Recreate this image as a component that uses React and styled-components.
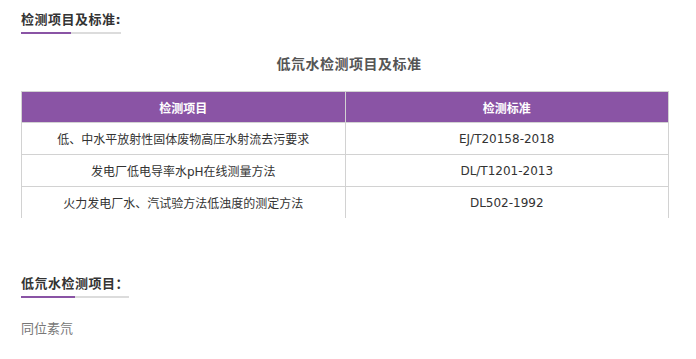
import styled, { createGlobalStyle } from 'styled-components'

const GlobalStyle = createGlobalStyle`
    body {
        margin: 0;
        background: #fff;
        font-family: "DejaVu Sans", "Noto Sans CJK SC", sans-serif;
    }
`

const COLORS = {
    purple: '#8a54a5',
    line: '#d2d2d2',
    text: '#333',
    grey: '#777',
}

const Page = styled.div`
    padding: 9px 27px 0 21px;
    width: 648px;
`

const SectionTitle = styled.h3`
    position: relative;
    display: inline-block;
    margin: 0;
    margin-top: ${p => p.$top || 0}px;
    font-size: 13px;
    line-height: 20px;
    letter-spacing: 0.5px;
    font-weight: 700;
    color: ${COLORS.text};
    padding-bottom: 2px;
    border-bottom: 2px solid #dcdcdc;
    &::after {
        content: '';
        position: absolute;
        left: 0;
        bottom: -2px;
        width: 50%;
        height: 2px;
        background: ${COLORS.purple};
    }
`

const TableCaption = styled.div`
    margin-top: 20px;
    padding-left: 8px;
    text-align: center;
    font-size: 14px;
    line-height: 20px;
    letter-spacing: 0.5px;
    font-weight: 700;
    color: #555;
`

const Table = styled.table`
    margin-top: 17px;
    width: 648px;
    border-collapse: collapse;
    table-layout: fixed;
    font-size: 12px;
    th, td {
        border: 1px solid ${COLORS.line};
        padding: 0;
        text-align: center;
    }
    th {
        height: 30px;
        background: ${COLORS.purple};
        color: #fff;
        font-weight: 700;
    }
    td {
        height: 31px;
        color: ${COLORS.text};
    }
    tr:last-child td {
        border-bottom: none;
    }
`

const Paragraph = styled.p`
    margin: 21px 0 0;
    font-size: 13px;
    line-height: 20px;
    color: ${COLORS.grey};
`

const rows = [
    { item: '低、中水平放射性固体废物高压水射流去污要求', standard: 'EJ/T20158-2018' },
    { item: '发电厂低电导率水pH在线测量方法', standard: 'DL/T1201-2013' },
    { item: '火力发电厂水、汽试验方法低浊度的测定方法', standard: 'DL502-1992' },
]

export default function App() {
    return (
        <>
            <GlobalStyle />
            <Page>
                <SectionTitle>检测项目及标准:</SectionTitle>
                <TableCaption>低氘水检测项目及标准</TableCaption>
                <Table>
                    <thead>
                        <tr>
                            <th>检测项目</th>
                            <th>检测标准</th>
                        </tr>
                    </thead>
                    <tbody>
                        {rows.map(r => (
                            <tr key={r.standard}>
                                <td>{r.item}</td>
                                <td>{r.standard}</td>
                            </tr>
                        ))}
                    </tbody>
                </Table>
                <div>
                    <SectionTitle $top={56}>低氘水检测项目：</SectionTitle>
                </div>
                <Paragraph>同位素氘</Paragraph>
            </Page>
        </>
    )
}
